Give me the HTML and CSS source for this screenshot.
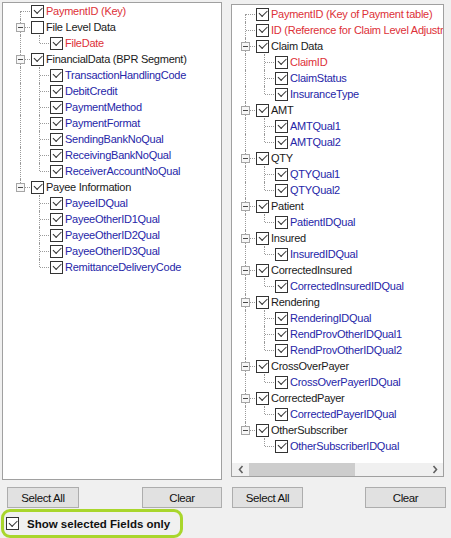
FILE: index.html
```html
<!DOCTYPE html>
<html>
<head>
<meta charset="utf-8">
<link rel="stylesheet" href="styles.css">
</head>
<body>
<div class="main">
  <div class="col col-left">
    <div class="panel panel-left">
      <div class="tree tree-left">
        <div class="row"><span class="con first"></span><span class="cb on"></span><span class="lbl red">PaymentID (Key)</span></div>
        <div class="row"><span class="con"><span class="exp"></span></span><span class="cb"></span><span class="lbl">File Level Data</span></div>
        <div class="row"><span class="ind v"></span><span class="con last"></span><span class="cb on"></span><span class="lbl red">FileDate</span></div>
        <div class="row"><span class="con"><span class="exp"></span></span><span class="cb on"></span><span class="lbl">FinancialData (BPR Segment)</span></div>
        <div class="row"><span class="ind v"></span><span class="con"></span><span class="cb on"></span><span class="lbl blue">TransactionHandlingCode</span></div>
        <div class="row"><span class="ind v"></span><span class="con"></span><span class="cb on"></span><span class="lbl blue">DebitCredit</span></div>
        <div class="row"><span class="ind v"></span><span class="con"></span><span class="cb on"></span><span class="lbl blue">PaymentMethod</span></div>
        <div class="row"><span class="ind v"></span><span class="con"></span><span class="cb on"></span><span class="lbl blue">PaymentFormat</span></div>
        <div class="row"><span class="ind v"></span><span class="con"></span><span class="cb on"></span><span class="lbl blue">SendingBankNoQual</span></div>
        <div class="row"><span class="ind v"></span><span class="con"></span><span class="cb on"></span><span class="lbl blue">ReceivingBankNoQual</span></div>
        <div class="row"><span class="ind v"></span><span class="con last"></span><span class="cb on"></span><span class="lbl blue">ReceiverAccountNoQual</span></div>
        <div class="row"><span class="con last"><span class="exp"></span></span><span class="cb on"></span><span class="lbl">Payee Information</span></div>
        <div class="row"><span class="ind"></span><span class="con"></span><span class="cb on"></span><span class="lbl blue">PayeeIDQual</span></div>
        <div class="row"><span class="ind"></span><span class="con"></span><span class="cb on"></span><span class="lbl blue">PayeeOtherID1Qual</span></div>
        <div class="row"><span class="ind"></span><span class="con"></span><span class="cb on"></span><span class="lbl blue">PayeeOtherID2Qual</span></div>
        <div class="row"><span class="ind"></span><span class="con"></span><span class="cb on"></span><span class="lbl blue">PayeeOtherID3Qual</span></div>
        <div class="row"><span class="ind"></span><span class="con last"></span><span class="cb on"></span><span class="lbl blue">RemittanceDeliveryCode</span></div>
      </div>
    </div>
    <div class="btns btns-left">
      <button class="btn btn-sel-l">Select All</button>
      <button class="btn btn-clr-l">Clear</button>
    </div>
  </div>

  <div class="col col-right">
    <div class="panel panel-right">
      <div class="tree tree-right">
        <div class="row"><span class="con first"></span><span class="cb on"></span><span class="lbl red">PaymentID (Key of Payment table)</span></div>
        <div class="row"><span class="con"></span><span class="cb on"></span><span class="lbl red">ID (Reference for Claim Level Adjustment)</span></div>
        <div class="row"><span class="con"><span class="exp"></span></span><span class="cb on"></span><span class="lbl">Claim Data</span></div>
        <div class="row"><span class="ind v"></span><span class="con"></span><span class="cb on"></span><span class="lbl red">ClaimID</span></div>
        <div class="row"><span class="ind v"></span><span class="con"></span><span class="cb on"></span><span class="lbl blue">ClaimStatus</span></div>
        <div class="row"><span class="ind v"></span><span class="con last"></span><span class="cb on"></span><span class="lbl blue">InsuranceType</span></div>
        <div class="row"><span class="con"><span class="exp"></span></span><span class="cb on"></span><span class="lbl">AMT</span></div>
        <div class="row"><span class="ind v"></span><span class="con"></span><span class="cb on"></span><span class="lbl blue">AMTQual1</span></div>
        <div class="row"><span class="ind v"></span><span class="con last"></span><span class="cb on"></span><span class="lbl blue">AMTQual2</span></div>
        <div class="row"><span class="con"><span class="exp"></span></span><span class="cb on"></span><span class="lbl">QTY</span></div>
        <div class="row"><span class="ind v"></span><span class="con"></span><span class="cb on"></span><span class="lbl blue">QTYQual1</span></div>
        <div class="row"><span class="ind v"></span><span class="con last"></span><span class="cb on"></span><span class="lbl blue">QTYQual2</span></div>
        <div class="row"><span class="con"><span class="exp"></span></span><span class="cb on"></span><span class="lbl">Patient</span></div>
        <div class="row"><span class="ind v"></span><span class="con last"></span><span class="cb on"></span><span class="lbl blue">PatientIDQual</span></div>
        <div class="row"><span class="con"><span class="exp"></span></span><span class="cb on"></span><span class="lbl">Insured</span></div>
        <div class="row"><span class="ind v"></span><span class="con last"></span><span class="cb on"></span><span class="lbl blue">InsuredIDQual</span></div>
        <div class="row"><span class="con"><span class="exp"></span></span><span class="cb on"></span><span class="lbl">CorrectedInsured</span></div>
        <div class="row"><span class="ind v"></span><span class="con last"></span><span class="cb on"></span><span class="lbl blue">CorrectedInsuredIDQual</span></div>
        <div class="row"><span class="con"><span class="exp"></span></span><span class="cb on"></span><span class="lbl">Rendering</span></div>
        <div class="row"><span class="ind v"></span><span class="con"></span><span class="cb on"></span><span class="lbl blue">RenderingIDQual</span></div>
        <div class="row"><span class="ind v"></span><span class="con"></span><span class="cb on"></span><span class="lbl blue">RendProvOtherIDQual1</span></div>
        <div class="row"><span class="ind v"></span><span class="con last"></span><span class="cb on"></span><span class="lbl blue">RendProvOtherIDQual2</span></div>
        <div class="row"><span class="con"><span class="exp"></span></span><span class="cb on"></span><span class="lbl">CrossOverPayer</span></div>
        <div class="row"><span class="ind v"></span><span class="con last"></span><span class="cb on"></span><span class="lbl blue">CrossOverPayerIDQual</span></div>
        <div class="row"><span class="con"><span class="exp"></span></span><span class="cb on"></span><span class="lbl">CorrectedPayer</span></div>
        <div class="row"><span class="ind v"></span><span class="con last"></span><span class="cb on"></span><span class="lbl blue">CorrectedPayerIDQual</span></div>
        <div class="row"><span class="con last"><span class="exp"></span></span><span class="cb on"></span><span class="lbl">OtherSubscriber</span></div>
        <div class="row"><span class="ind"></span><span class="con last"></span><span class="cb on"></span><span class="lbl blue">OtherSubscriberIDQual</span></div>
      </div>
      <div class="hscroll">
        <span class="arrow">
          <svg width="6" height="9" viewBox="0 0 6 9"><polyline points="4.5,1 1.5,4.5 4.5,8" fill="none" stroke="#606060" stroke-width="1.6"/></svg>
        </span>
        <span class="track"><span class="thumb"></span></span>
        <span class="arrow">
          <svg width="6" height="9" viewBox="0 0 6 9"><polyline points="1.5,1 4.5,4.5 1.5,8" fill="none" stroke="#606060" stroke-width="1.6"/></svg>
        </span>
      </div>
    </div>
    <div class="btns btns-right">
      <button class="btn btn-sel-r">Select All</button>
      <button class="btn btn-clr-r">Clear</button>
    </div>
  </div>
</div>

<div class="showsel">
  <span class="cb on big"></span>
  <span class="showsel-text">Show selected Fields only</span>
</div>
</body>
</html>
```

FILE: styles.css
```css
html, body {
  margin: 0;
  padding: 0;
}
body {
  width: 451px;
  height: 538px;
  overflow: hidden;
  background: #f0f0f0;
  font-family: "Liberation Sans", Arial, sans-serif;
  color: #1a1a1a;
}
.main {
  display: flex;
  height: 509px;
}
.col {
  display: flex;
  flex-direction: column;
  width: 220px;
}
.col-left {
  margin-left: 2px;
}
.col-right {
  margin-left: 9px;
}
.panel {
  box-sizing: border-box;
  background: #fff;
  border: 1px solid #a0a0a0;
  overflow: hidden;
}
.panel-left {
  margin-top: 2px;
  width: 220px;
  height: 478px;
}
.panel-right {
  margin-top: 4px;
  width: 213px;
  height: 473px;
  display: flex;
  flex-direction: column;
}
.tree {
  white-space: nowrap;
  overflow: hidden;
}
.tree-left {
  padding-left: 8px;
}
.tree-right {
  flex: 1;
  padding-left: 4px;
  padding-top: 1px;
}
.row {
  display: flex;
  align-items: center;
  height: 16px;
}
.ind, .con {
  position: relative;
  flex: none;
  width: 19px;
  height: 16px;
}
.ind.v::before,
.con::before {
  content: "";
  position: absolute;
  left: 9px;
  top: 0;
  bottom: 0;
  border-left: 1px dotted #9a9a9a;
}
.con.first::before {
  top: 8px;
}
.con.last::before {
  bottom: 8px;
}
.con::after {
  content: "";
  position: absolute;
  left: 10px;
  right: 0;
  top: 8px;
  border-top: 1px dotted #9a9a9a;
}
.exp {
  position: absolute;
  z-index: 1;
  left: 5px;
  top: 4px;
  width: 9px;
  height: 9px;
  box-sizing: border-box;
  border: 1px solid #a6a6a6;
  background: #f7f7f7;
}
.exp::after {
  content: "";
  position: absolute;
  left: 1px;
  top: 3px;
  width: 5px;
  height: 1px;
  background: #4a4a4a;
}
.cb {
  position: relative;
  flex: none;
  box-sizing: border-box;
  width: 13px;
  height: 13px;
  margin-left: 1px;
  border: 1px solid #333;
  background: #fff;
}
.cb.on::after {
  content: "";
  position: absolute;
  left: 2px;
  top: 1.5px;
  width: 7px;
  height: 3.5px;
  border-left: 1.2px solid #333;
  border-bottom: 1.2px solid #333;
  transform: rotate(-45deg);
}
.lbl {
  padding-left: 2px;
  font-size: 11px;
  letter-spacing: -0.25px;
  line-height: 16px;
  color: #1a1a1a;
}
.lbl.red {
  color: #dd3138;
}
.lbl.blue {
  color: #2626a8;
}
.hscroll {
  flex: none;
  display: flex;
  height: 13px;
  background: #f0f0f0;
}
.arrow {
  flex: none;
  width: 17px;
  display: flex;
  align-items: center;
  justify-content: center;
}
.track {
  flex: 1;
  display: flex;
}
.thumb {
  width: 106px;
  background: #cdcdcd;
}
.btns {
  display: flex;
  justify-content: space-between;
}
.btns-left {
  margin-top: 7px;
  padding-left: 5px;
}
.btns-right {
  margin-top: 10px;
  padding-left: 1px;
  padding-right: 5px;
}
.btn {
  box-sizing: border-box;
  height: 21px;
  padding: 0;
  background: #e1e1e1;
  border: 1px solid #adadad;
  border-radius: 0;
  font-family: "Liberation Sans", Arial, sans-serif;
  font-size: 11.5px;
  letter-spacing: -0.4px;
  color: #111;
}
.btn-sel-l { width: 72px; }
.btn-clr-l { width: 80px; }
.btn-sel-r { width: 71px; }
.btn-clr-r { width: 81px; }
.showsel {
  box-sizing: border-box;
  display: flex;
  align-items: center;
  margin-left: 1px;
  width: 182px;
  height: 29px;
  padding-left: 1px;
  border: 3px solid #a9d62c;
  border-radius: 9px;
}
.showsel .cb {
  margin-left: 1px;
}
.showsel-text {
  margin-left: 8px;
  font-size: 11.5px;
  font-weight: bold;
  color: #111;
}
```
